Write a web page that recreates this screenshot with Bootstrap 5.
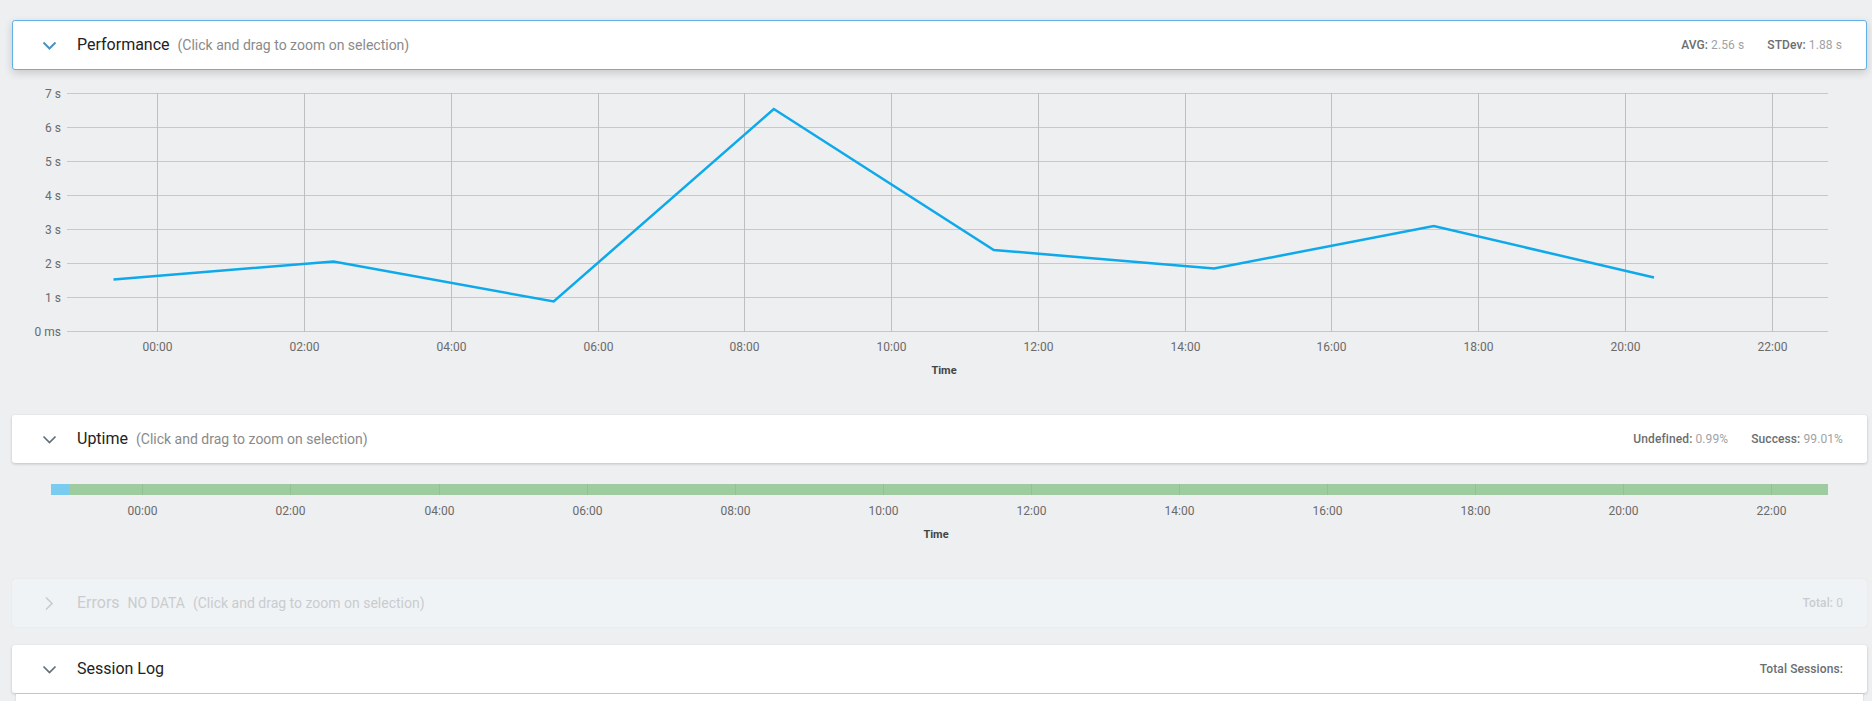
<!DOCTYPE html>
<html lang="en">
<head>
    <meta charset="UTF-8">
    <meta name="viewport" content="width=device-width, initial-scale=1.0">
    <title>Monitor Details</title>
    <link href="https://cdn.jsdelivr.net/npm/bootstrap@5.3.2/dist/css/bootstrap.min.css" rel="stylesheet" />
    <style>
        html, body { height: 100%; overflow: hidden; }
        body { background: #eeeff1; font-family: Roboto, "Liberation Sans", sans-serif; color: #333; }
        .page-wrap { padding: 20px 5px 0 12px; }
        .section-head { height: 48px; background: #fff; border-radius: 3px; padding: 0 24px 0 30px; box-shadow: 0 1px 3px rgba(0, 0, 0, .2); }
        .section-head.is-open { height: 50px; border: 1px solid #5fb1e6; padding: 0 24px 0 29px; box-shadow: 0 3px 9px rgba(0, 0, 0, .16); }
        .section-head.is-off { background: #f0f3f5; box-shadow: 0 0 1px rgba(0, 0, 0, .12); }
        .section-head.is-off .head-title, .section-head.is-off .head-note, .section-head.is-off .head-stats, .section-head.is-off .head-stats b { color: #c9cccf; }
        .head-chevron { width: 15px; height: 9px; margin-right: 20px; flex: none; fill: none; stroke: #626e78; stroke-width: 1.7; }
        .is-open .head-chevron { stroke: #4a93c2; stroke-width: 2; }
        .is-off .head-chevron { width: 15px; height: 15px; stroke: #c8cccf; }
        .head-title { font-size: 16px; color: #222; margin-right: 8px; }
        .head-note { font-size: 14px; color: #8a8a8a; font-weight: 400; }
        .head-note + .head-note { margin-left: 8px; }
        .head-stats { font-size: 12px; color: #a0a3a6; font-weight: 400; letter-spacing: .1px; }
        .head-stats b { color: #6b6e70; font-weight: 500; }
        .head-stats span + span { margin-left: 23px; }
        .chart-box { display: block; width: 1855px; }
        .chart-box text { font-family: Roboto, "Liberation Sans", sans-serif; font-size: 12px; fill: #6a6a6a; }
        .chart-box text.axis-name { font-size: 11px; font-weight: 700; fill: #444; }
        .perf-chart { height: 345px; }
        .uptime-chart { height: 116px; }
        .gap-row { height: 18px; }
        .log-body { background: #fff; height: 60px; margin: 1px 4px 0 4px; box-shadow: 0 0 2px rgba(0, 0, 0, .15); }
    </style>
</head>
<body>
<div class="page-wrap">
    <div class="section-head is-open d-flex align-items-center">
        <svg class="head-chevron" viewBox="0 0 15 9"><path d="M1.500 1.500 7.500 7.500 13.500 1.500"/></svg>
        <span class="head-title">Performance</span>
        <span class="head-note">(Click and drag to zoom on selection)</span>
        <div class="head-stats ms-auto"><span><b>AVG:</b> 2.56 s</span><span><b>STDev:</b> 1.88 s</span></div>
    </div>
    <svg class="chart-box perf-chart" id="perfChart" viewBox="12 70 1855 345"></svg>

    <div class="section-head d-flex align-items-center">
        <svg class="head-chevron" viewBox="0 0 15 9"><path d="M1.500 1.500 7.500 7.500 13.500 1.500"/></svg>
        <span class="head-title">Uptime</span>
        <span class="head-note">(Click and drag to zoom on selection)</span>
        <div class="head-stats ms-auto"><span><b>Undefined:</b> 0.99%</span><span><b>Success:</b> 99.01%</span></div>
    </div>
    <svg class="chart-box uptime-chart" id="uptimeChart" viewBox="12 463 1855 116"></svg>

    <div class="section-head is-off d-flex align-items-center">
        <svg class="head-chevron" viewBox="0 0 15 15"><path d="M4 1.500 10 7.500 4 13.500"/></svg>
        <span class="head-title">Errors</span>
        <span class="head-note">NO DATA</span>
        <span class="head-note">(Click and drag to zoom on selection)</span>
        <div class="head-stats ms-auto"><span><b>Total:</b> 0</span></div>
    </div>
    <div class="gap-row"></div>

    <div class="section-head d-flex align-items-center">
        <svg class="head-chevron" viewBox="0 0 15 9"><path d="M1.500 1.500 7.500 7.500 13.500 1.500"/></svg>
        <span class="head-title">Session Log</span>
        <div class="head-stats ms-auto"><span><b>Total Sessions:</b></span></div>
    </div>
    <div class="log-body"></div>
</div>
<script>
    const times = ["00:00", "02:00", "04:00", "06:00", "08:00", "10:00", "12:00", "14:00", "16:00", "18:00", "20:00", "22:00"];

    // performance chart
    let perf = "";
    ["7 s", "6 s", "5 s", "4 s", "3 s", "2 s", "1 s", "0 ms"].forEach((label, i) => {
        const y = 93.5 + i * 34;
        perf += `<line x1="67" x2="1828" y1="${y}" y2="${y}" stroke="#c6c8ca"/>`;
        perf += `<text x="61" y="${y + 4}" text-anchor="end">${label}</text>`;
    });
    times.forEach((label, i) => {
        const x = Math.floor(157.9 + i * 146.75) + 0.5;
        perf += `<line x1="${x}" x2="${x}" y1="93" y2="332" stroke="#bdbfc2"/>`;
        perf += `<text x="${x}" y="351" text-anchor="middle">${label}</text>`;
    });
    const points = "113.5,279.5 333.5,261.5 553.700,301.500 773.800,109 993.800,250 1214,268.500 1433.800,226 1654,277.500";
    perf += `<polyline points="${points}" fill="none" stroke="#0ea9ea" stroke-width="2.5"/>`;
    perf += `<text class="axis-name" x="944" y="374" text-anchor="middle">Time</text>`;
    document.getElementById("perfChart").innerHTML = perf;

    // uptime bar
    let uptime = `<rect x="51" y="484" width="18" height="11" fill="#7acbf0"/>`;
    uptime += `<rect x="69" y="484" width="1759" height="11" fill="#9ecb9f"/>`;
    times.forEach((label, i) => {
        const x = Math.round(142.3 + i * 148.1) + 0.5;
        uptime += `<line x1="${x}" x2="${x}" y1="484" y2="495" stroke="#92c195"/>`;
        uptime += `<text x="${x}" y="515" text-anchor="middle">${label}</text>`;
    });
    uptime += `<text class="axis-name" x="936" y="538" text-anchor="middle">Time</text>`;
    document.getElementById("uptimeChart").innerHTML = uptime;
</script>
<script src="https://cdn.jsdelivr.net/npm/bootstrap@5.3.2/dist/js/bootstrap.bundle.min.js"></script>
</body>
</html>
